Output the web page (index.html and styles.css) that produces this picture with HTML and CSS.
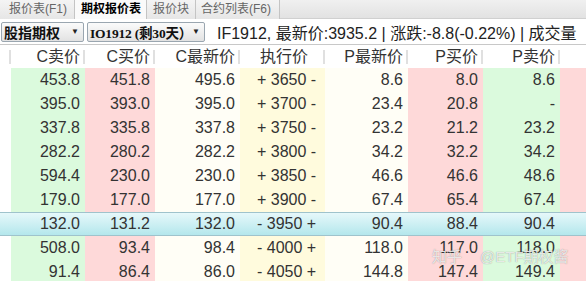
FILE: index.html
```html
<!DOCTYPE html>
<html>
<head>
<meta charset="utf-8">
<link rel="stylesheet" href="styles.css">
</head>
<body>
<div class="app">
  <div class="tabs">
    <div class="tab t1">报价表(F1)</div>
    <div class="tab t2 active">期权报价表</div>
    <div class="tab t3">报价块</div>
    <div class="tab t4">合约列表(F6)</div>
    <div class="tab-rest"></div>
  </div>
  <div class="toolbar">
    <div class="select s1"><span class="sel-text">股指期权</span><span class="arrow">▼</span></div>
    <div class="select s2"><span class="sel-text serif">IO1912 (剩30天）</span><span class="arrow">▼</span></div>
    <div class="info">IF1912, 最新价:3935.2 | 涨跌:-8.8(-0.22%) | 成交量</div>
  </div>
  <div class="grid">
    <div class="row head">
      <div class="c c0"></div>
      <div class="c c1">C卖价</div>
      <div class="c c2">C买价</div>
      <div class="c c3">C最新价</div>
      <div class="c c4">执行价</div>
      <div class="c c5">P最新价</div>
      <div class="c c6">P买价</div>
      <div class="c c7">P卖价</div>
      <div class="c c8"></div>
    </div>
    <div class="row"><div class="c c0"></div><div class="c c1">453.8</div><div class="c c2">451.8</div><div class="c c3">495.6</div><div class="c c4">+ 3650 -</div><div class="c c5">8.6</div><div class="c c6">8.0</div><div class="c c7">8.6</div><div class="c c8"></div></div>
    <div class="row"><div class="c c0"></div><div class="c c1">395.0</div><div class="c c2">393.0</div><div class="c c3">395.0</div><div class="c c4">+ 3700 -</div><div class="c c5">23.4</div><div class="c c6">20.8</div><div class="c c7">-</div><div class="c c8"></div></div>
    <div class="row"><div class="c c0"></div><div class="c c1">337.8</div><div class="c c2">335.8</div><div class="c c3">337.8</div><div class="c c4">+ 3750 -</div><div class="c c5">23.2</div><div class="c c6">21.2</div><div class="c c7">23.2</div><div class="c c8"></div></div>
    <div class="row"><div class="c c0"></div><div class="c c1">282.2</div><div class="c c2">280.2</div><div class="c c3">282.2</div><div class="c c4">+ 3800 -</div><div class="c c5">34.2</div><div class="c c6">32.2</div><div class="c c7">34.2</div><div class="c c8"></div></div>
    <div class="row"><div class="c c0"></div><div class="c c1">594.4</div><div class="c c2">230.0</div><div class="c c3">230.0</div><div class="c c4">+ 3850 -</div><div class="c c5">46.6</div><div class="c c6">46.6</div><div class="c c7">48.6</div><div class="c c8"></div></div>
    <div class="row"><div class="c c0"></div><div class="c c1">179.0</div><div class="c c2">177.0</div><div class="c c3">177.0</div><div class="c c4">+ 3900 -</div><div class="c c5">67.4</div><div class="c c6">65.4</div><div class="c c7">67.4</div><div class="c c8"></div></div>
    <div class="row hl"><div class="c c0"></div><div class="c c1">132.0</div><div class="c c2">131.2</div><div class="c c3">132.0</div><div class="c c4">- 3950 +</div><div class="c c5">90.4</div><div class="c c6">88.4</div><div class="c c7">90.4</div><div class="c c8"></div></div>
    <div class="row"><div class="c c0"></div><div class="c c1">508.0</div><div class="c c2">93.4</div><div class="c c3">98.4</div><div class="c c4">- 4000 +</div><div class="c c5">118.0</div><div class="c c6">117.0</div><div class="c c7">118.0</div><div class="c c8"></div></div>
    <div class="row"><div class="c c0"></div><div class="c c1">91.4</div><div class="c c2">86.4</div><div class="c c3">86.0</div><div class="c c4">- 4050 +</div><div class="c c5">144.8</div><div class="c c6">147.4</div><div class="c c7">149.4</div><div class="c c8"></div></div>
  </div>
  <div class="watermark"><span class="wm1">知乎</span><span>@ETF期权酱</span></div>
</div>
</body>
</html>
```
FILE: styles.css
```css
* { box-sizing: border-box; }
html, body { margin: 0; padding: 0; background: #fff; }
body { width: 586px; height: 281px; overflow: hidden; font-family: "Liberation Sans", "Noto Sans CJK SC", sans-serif; }
.app { position: relative; width: 586px; height: 281px; overflow: hidden; }

.tabs { display: flex; height: 19px; background: linear-gradient(#f0f0f0, #e2e2e2); border-bottom: 1px solid #d0d0d0; }
.tab { height: 19px; font-size: 12px; line-height: 19px; color: #666; border-right: 1px solid #c4c4c4; background: linear-gradient(#f4f4f4, #e6e6e6); white-space: nowrap; }
.t1 { padding: 0 7px 0 9px; }
.t2 { padding: 0 5px 0 6px; }
.t3 { padding: 0 6px 0 6px; }
.t4 { padding: 0 8px 0 5px; }
.tab.active { color: #000; font-weight: bold; background: #fafafa; }
.tab-rest { flex: 1; }

.toolbar { display: flex; align-items: center; height: 26px; padding: 3px 0 3px 1px; gap: 3px; background: #fff; border-bottom: 1px solid #c8c8c8; }
.select { display: flex; align-items: center; justify-content: space-between; height: 20px; border: 1px solid #9aa6b0; border-radius: 2px; background: linear-gradient(#fbfbfb, #e2e2e2); padding: 0 4px 0 2px; }
.s1 { width: 83px; }
.s2 { width: 118px; }
.sel-text { font-size: 14px; font-weight: bold; color: #111; white-space: nowrap; }
.serif { font-family: "Liberation Serif", "Noto Sans CJK SC", serif; font-size: 13.5px; letter-spacing: -0.2px; }
.arrow { font-size: 8px; color: #222; }
.info { margin-left: 9px; font-size: 16px; color: #222; white-space: nowrap; }

.grid { display: flex; flex-direction: column; }
.row { display: grid; grid-template-columns: 11px 74px 70px 85px 85px 83px 75px 77px 26px; height: 24px; }
.c { font-size: 16px; line-height: 24px; color: #333; text-align: right; padding-right: 5px; white-space: nowrap; }
.c0 { background: #fff; }
.c1, .c7 { background: #dbfadd; }
.c2, .c6, .c8 { background: #fed9d9; }
.c3, .c5 { background: #fffef6; }
.c4 { background: #fffbdd; text-align: left; padding-left: 17px; }

.row.head { height: 23px; border-bottom: 1px solid #c9c9c9; }
.head .c { background: #fff; line-height: 23px; position: relative; color: #333; }
.head .c4 { padding-left: 20px; }
.head .c::after { content: ""; position: absolute; right: 0; top: 5px; height: 14px; border-right: 2px solid #e0e0e0; }
.head .c8::after { display: none; }

.row.hl { background: linear-gradient(#e6f8fa, #b4e7ec); border-top: 1px solid #9fc3cc; border-bottom: 1px solid #9fc3cc; }
.row.hl .c { background: transparent; line-height: 22px; }

.watermark { position: absolute; left: 432px; top: 245px; display: flex; gap: 18px; font-size: 15px; color: rgba(255,255,255,0.8); text-shadow: 0 0 1px rgba(90,90,90,0.7); white-space: nowrap; }
```
